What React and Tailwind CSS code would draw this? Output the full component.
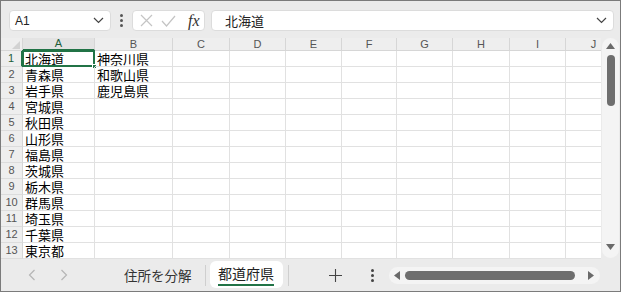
import React from 'react';

const cols = [
  { key: 'A', w: 'w-[72px]' },
  { key: 'B', w: 'w-[78px]' },
  { key: 'C', w: 'w-[57px]' },
  { key: 'D', w: 'w-[56px]' },
  { key: 'E', w: 'w-[56px]' },
  { key: 'F', w: 'w-[55px]' },
  { key: 'G', w: 'w-[56px]' },
  { key: 'H', w: 'w-[57px]' },
  { key: 'I', w: 'w-[56px]' },
  { key: 'J', w: 'w-[56px]' },
];

const colA = ['北海道', '青森県', '岩手県', '宮城県', '秋田県', '山形県', '福島県', '茨城県', '栃木県', '群馬県', '埼玉県', '千葉県', '東京都'];
const colB = ['神奈川県', '和歌山県', '鹿児島県'];

const jp = { fontFamily: '"Noto Sans CJK JP", "Noto Sans", sans-serif' };
const ui = { fontFamily: '"Liberation Sans", "Noto Sans", sans-serif' };

const Chevron = ({ className }) => (
  <svg className={className} width="11" height="7" viewBox="0 0 11 7" fill="none">
    <path d="M1 1l4.5 4.5L10 1" stroke="#444" strokeWidth="1.2" />
  </svg>
);

const TopBar = () => (
  <div className="h-[37px] flex items-center pl-[8px] pr-[6px] pt-[2px] shrink-0">
    <div className="w-[102px] h-[21px] bg-white rounded-[4px] border border-[#dcdcdc] flex items-center justify-between pl-[5px] pr-[6px]">
      <span className="text-[12px] text-[#222]" style={ui}>A1</span>
      <Chevron />
    </div>
    <div className="w-[21px] flex flex-col items-center gap-[2px]">
      <span className="w-[3px] h-[3px] bg-[#555] rounded-full" />
      <span className="w-[3px] h-[3px] bg-[#555] rounded-full" />
      <span className="w-[3px] h-[3px] bg-[#555] rounded-full" />
    </div>
    <div className="w-[73px] h-[21px] bg-white rounded-[4px] border border-[#dcdcdc] flex items-center pl-[7px] gap-[8px]">
      <svg width="13" height="13" viewBox="0 0 13 13">
        <path d="M1 1l11 11M12 1L1 12" stroke="#c4c4c4" strokeWidth="1.2" />
      </svg>
      <svg width="15" height="12" viewBox="0 0 15 12" fill="none">
        <path d="M1 6l4.5 5L14 1" stroke="#c4c4c4" strokeWidth="1.2" />
      </svg>
      <span className="ml-[4px] italic text-[16px] text-[#333] leading-none" style={{ fontFamily: '"Liberation Serif", serif' }}>fx</span>
    </div>
    <div className="ml-[6px] flex-1 h-[21px] bg-white rounded-[4px] border border-[#dcdcdc] flex items-center justify-between pl-[13px] pr-[6px]">
      <span className="text-[13px] text-[#222]" style={jp}>北海道</span>
      <Chevron />
    </div>
  </div>
);

const Grid = () => (
  <div className="w-[600px] overflow-hidden bg-white">
    <div className="flex h-[13px] bg-[#eeeeee]">
      <div className="w-[22px] shrink-0 border-r border-b border-[#d6d6d6] relative">
        <svg className="absolute right-[2px] bottom-[1px]" width="8" height="8" viewBox="0 0 8 8">
          <path d="M8 0v8H0z" fill="#d2d2d2" />
        </svg>
      </div>
      {cols.map((c) => (
        <div
          key={c.key}
          className={`${c.w} shrink-0 border-r flex items-center justify-center text-[11px] leading-none ${
            c.key === 'A' ? 'border-b-2 border-b-[#217346] border-r-[#d6d6d6] text-[#1e5e3a] bg-[#e3e3e3]' : 'border-b border-[#d6d6d6] text-[#555]'
          }`}
          style={ui}
        >
          {c.key}
        </div>
      ))}
    </div>
    {colA.map((a, i) => (
      <div key={i} className="flex h-[16px]">
        <div
          className={`w-[22px] shrink-0 border-b border-[#dcdcdc] bg-[#eeeeee] flex items-center justify-center text-[11px] leading-none ${
            i === 0 ? 'border-r-2 border-r-[#217346] text-[#1e5e3a] bg-[#e3e3e3]' : 'border-r border-r-[#d6d6d6] text-[#555]'
          }`}
          style={ui}
        >
          {i + 1}
        </div>
        {cols.map((c, j) => (
          <div
            key={c.key}
            className={`${c.w} shrink-0 border-r border-b border-[#e1e1e1] text-[13px] leading-[16px] pl-[2px] text-black whitespace-nowrap relative`}
            style={jp}
          >
            {j === 0 ? a : j === 1 ? colB[i] || '' : ''}
            {i === 0 && j === 0 && (
              <>
                <div className="absolute -left-px -top-px right-[-1px] bottom-[-1px] border-2 border-[#217346]" />
                <div className="absolute right-[-3px] bottom-[-3px] w-[5px] h-[5px] bg-[#217346] border border-white" />
              </>
            )}
          </div>
        ))}
      </div>
    ))}
  </div>
);

const VScroll = () => (
  <div className="flex-1 flex justify-center pb-[1px]">
    <div className="w-[17px] h-full rounded-full bg-[#f4f4f4] flex flex-col items-center pt-[5px] pb-[8px]">
      <svg width="9" height="6" viewBox="0 0 9 6">
        <path d="M4.5 0L9 6H0z" fill="#6a6a6a" />
      </svg>
      <div className="w-[8px] h-[51px] mt-[6px] rounded-full bg-[#6e6e6e]" />
      <div className="flex-1" />
      <svg width="9" height="6" viewBox="0 0 9 6">
        <path d="M0 0h9L4.5 6z" fill="#6a6a6a" />
      </svg>
    </div>
  </div>
);

const BottomBar = () => (
  <div className="h-[32px] flex items-start shrink-0">
    <div className="flex items-center h-[32px] pl-[27px] gap-[24px]">
      <svg width="8" height="12" viewBox="0 0 8 12" fill="none">
        <path d="M6.5 1L1.5 6l5 5" stroke="#b5b5b5" strokeWidth="1.2" />
      </svg>
      <svg width="8" height="12" viewBox="0 0 8 12" fill="none">
        <path d="M1.5 1l5 5-5 5" stroke="#b5b5b5" strokeWidth="1.2" />
      </svg>
    </div>
    <div className="ml-[56px] h-[32px] flex items-center text-[13.5px] text-[#333]" style={jp}>住所を分解</div>
    <div className="ml-[13px] mt-[6px] w-px h-[21px] bg-[#cfcfcf]" />
    <div className="ml-[4px] mt-[2px] w-[73px] h-[27px] bg-white rounded-[6px] flex flex-col items-center pt-[3px]">
      <span className="text-[14px] leading-[19px] text-[#222]" style={jp}>都道府県</span>
      <div className="w-[56px] h-[2px] bg-[#217346] mt-[1px]" />
    </div>
    <div className="ml-[5px] mt-[6px] w-px h-[21px] bg-[#cfcfcf]" />
    <div className="ml-[40px] h-[32px] flex items-center">
      <svg width="13" height="13" viewBox="0 0 13 13">
        <path d="M6.5 0v13M0 6.5h13" stroke="#444" strokeWidth="1.1" />
      </svg>
    </div>
    <div className="ml-[29px] h-[32px] flex flex-col items-center justify-center gap-[2px]">
      <span className="w-[3px] h-[3px] bg-[#444] rounded-full" />
      <span className="w-[3px] h-[3px] bg-[#444] rounded-full" />
      <span className="w-[3px] h-[3px] bg-[#444] rounded-full" />
    </div>
    <div className="ml-[15px] mt-[8px] w-[211px] h-[17px] rounded-full bg-[#f4f4f4] flex items-center pl-[5px] pr-[6px]">
      <svg width="6" height="9" viewBox="0 0 6 9">
        <path d="M0 4.5L6 0v9z" fill="#6a6a6a" />
      </svg>
      <div className="ml-[5px] w-[170px] h-[9px] rounded-full bg-[#6e6e6e]" />
      <div className="flex-1" />
      <svg width="6" height="9" viewBox="0 0 6 9">
        <path d="M6 4.5L0 0v9z" fill="#6a6a6a" />
      </svg>
    </div>
  </div>
);

export default function App() {
  return (
    <div className="w-[621px] h-[292px] border border-[#7b7b7b] bg-[#ebebeb] flex flex-col overflow-hidden box-border">
      <TopBar />
      <div className="flex h-[221px] shrink-0">
        <Grid />
        <VScroll />
      </div>
      <BottomBar />
    </div>
  );
}
